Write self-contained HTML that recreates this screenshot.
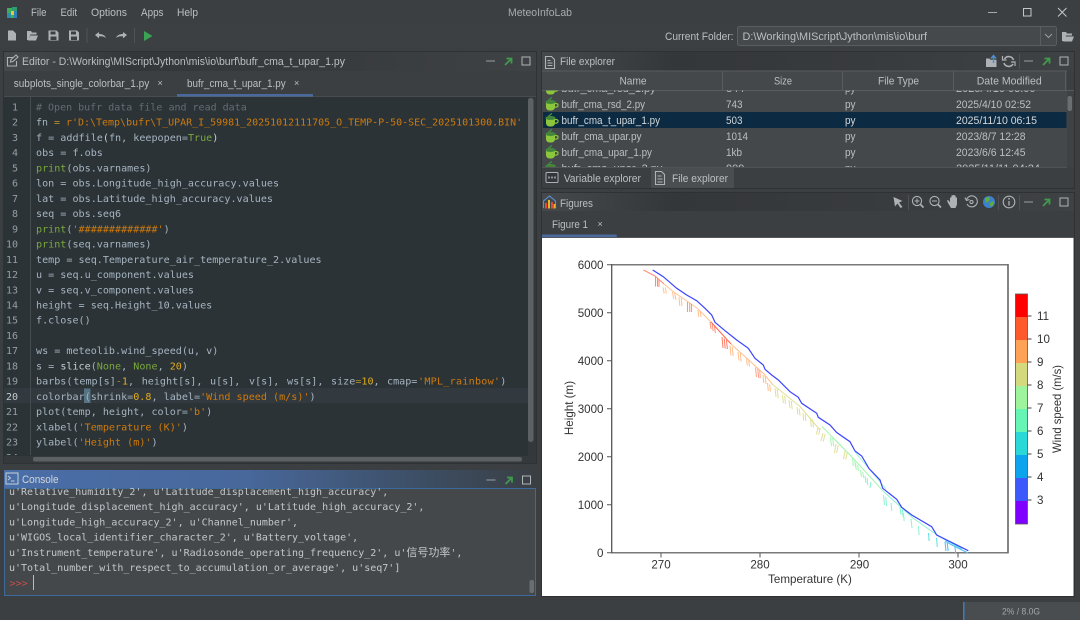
<!DOCTYPE html>
<html><head><meta charset="utf-8"><title>MeteoInfoLab</title>
<style>
html,body{margin:0;padding:0;background:#3c3f41;width:1080px;height:620px;overflow:hidden}
svg{display:block;position:absolute;left:0;top:0;filter:blur(.35px)}
.s{font-family:"Liberation Sans",sans-serif;font-size:11px;fill:#bcbfc2}
.m{font-family:"DejaVu Sans Mono","Liberation Mono",monospace;font-size:10.1px;fill:#a6b4c0;white-space:pre}
.c{fill:#c2c7ca;font-size:10px}
.n{font-family:"DejaVu Sans Mono","Liberation Mono",monospace;font-size:10px;fill:#949fa5;text-anchor:end}
.cm{fill:#626d73}.st{fill:#cf7a0c}.kw{fill:#7aa83c}.nu{fill:#e0ac1c}.br{fill:#c8d0d6}.op{fill:#b58a30}
.p{font-family:"Liberation Sans",sans-serif;font-size:11.6px;fill:#333}
.ic{fill:none;stroke:#aeb2b5;stroke-width:1.1}
.if{fill:#aeb2b5}
</style></head><body>
<svg width="1080" height="620" viewBox="0 0 1080 620" xmlns="http://www.w3.org/2000/svg">
<defs>
<linearGradient id="tg" x1="0" x2="1" y1="0" y2="0"><stop offset="0" stop-color="#46494c"/><stop offset=".25" stop-color="#34373a"/><stop offset=".6" stop-color="#383b3e"/><stop offset="1" stop-color="#3f4244"/></linearGradient>
<linearGradient id="cg" x1="0" x2="1" y1="0" y2="0"><stop offset="0" stop-color="#4a6ea8"/><stop offset=".45" stop-color="#48689c"/><stop offset=".8" stop-color="#3c4d62"/><stop offset="1" stop-color="#3a3f44"/></linearGradient>
<clipPath id="clipCode"><rect x="4" y="97" width="524" height="358"/></clipPath>
<clipPath id="clipCon"><rect x="5" y="488" width="525" height="107"/></clipPath>
<clipPath id="clipTab"><rect x="542" y="90.5" width="525" height="77"/></clipPath>
<g id="cup">
<path d="M-5,-1.5h9v4.5a3.5,3.5 0 0 1 -3.5,3.5h-2a3.5,3.5 0 0 1 -3.5,-3.5z" fill="#8cc63a"/>
<path d="M4,-0.5h1.3a1.7,1.7 0 0 1 0,3.6h-1.5" fill="none" stroke="#8cc63a" stroke-width="1.2"/>
<ellipse cx="-0.5" cy="-2" rx="4.6" ry="1.6" fill="#4f7f34" stroke="#3c8f42" stroke-width=".9"/>
<path d="M-2.5,-3.5c0,-1.6 3,-1.4 3,-3.4" fill="none" stroke="#3c8f42" stroke-width="1.3"/>
</g>
<g id="ctl">
<path d="M0,0h9" stroke="#9a9ea1" stroke-width="1"/>
<path d="M19,4l6,-6M20.5,-2.5h5v5" fill="none" stroke="#3f9a4c" stroke-width="1.8"/>
<rect x="36" y="-4" width="8" height="8" fill="none" stroke="#b0b4b7" stroke-width="1"/>
</g>
</defs>

<rect width="1080" height="620" fill="#3c3f41"/>
<rect x="0" y="24" width="1080" height="23" fill="#3d4043"/>

<!-- logo -->
<rect x="7" y="8" width="5" height="5" fill="#3fae5c"/><rect x="12" y="7" width="5" height="4" fill="#2f9e6e"/>
<rect x="7" y="13" width="4" height="5" fill="#2f8fa8"/><rect x="11" y="11" width="3" height="4" fill="#e6c93a"/>
<rect x="14" y="11" width="3" height="7" fill="#2c7fb8"/><rect x="11" y="15" width="3" height="3" fill="#3fae5c"/>

<!-- menu -->
<g class="s">
<text class="s" x="31" y="16" textLength="15.5" lengthAdjust="spacingAndGlyphs">File</text>
<text class="s" x="60.5" y="16" textLength="16.5" lengthAdjust="spacingAndGlyphs">Edit</text>
<text class="s" x="91" y="16" textLength="36" lengthAdjust="spacingAndGlyphs">Options</text>
<text class="s" x="141" y="16" textLength="22.5" lengthAdjust="spacingAndGlyphs">Apps</text>
<text class="s" x="177" y="16" textLength="21" lengthAdjust="spacingAndGlyphs">Help</text>
<text class="s" x="508" y="16" textLength="64" lengthAdjust="spacingAndGlyphs" style="fill:#a8abae">MeteoInfoLab</text>
<text class="s" x="665" y="40" textLength="68.5" lengthAdjust="spacingAndGlyphs">Current Folder:</text>
</g>

<!-- window controls -->
<path d="M988,12.5h9" stroke="#a8abae"/>
<rect x="1023.5" y="8.5" width="7.5" height="7.5" fill="none" stroke="#c4c7c9"/>
<path d="M1058,8l8.5,8.5M1066.5,8l-8.5,8.5" stroke="#c4c7c9" stroke-width="1"/>

<!-- toolbar -->
<path d="M8,30.5h5l3,3v7h-8z" class="if"/>
<path d="M27,40v-9h4l1,1.5h4.5v2h-6l-2,5.5zM30.5,35.5h7.5l-2,5h-8z" class="if"/>
<path d="M48.5,30.5h8l2,2v8h-10zM50.5,31.5v3h5v-3zM50.5,36.5v3.5h6v-3.5z" class="if" fill-rule="evenodd"/>
<path d="M69,30.5h8l2,2v8h-10zM71,31.5v3h5v-3zM71,36.5v3.5h6v-3.5z" class="if" fill-rule="evenodd"/>
<rect x="86.5" y="28" width="1" height="15" fill="#505356"/>
<path d="M95,35l4,-3v2c3,0 6,1 7,4c-2,-1.5 -4,-2 -7,-1.6v2z" class="if"/>
<path d="M127,35l-4,-3v2c-3,0 -6,1 -7,4c2,-1.5 4,-2 7,-1.6v2z" class="if"/>
<rect x="134" y="28" width="1" height="15" fill="#505356"/>
<path d="M144,31l8.5,5l-8.5,5z" fill="#3aa354"/>

<!-- current folder combo -->
<rect x="737.5" y="26.5" width="319" height="19" rx="2" fill="#46494b" stroke="#5b5e61"/>
<rect x="1040" y="27" width="1" height="18" fill="#5b5e61"/>
<path d="M1045,34l3.5,3.5l3.5,-3.5" fill="none" stroke="#9a9ea1"/>
<text class="s" x="742.5" y="40" textLength="184.5" lengthAdjust="spacingAndGlyphs">D:\Working\MIScript\Jython\mis\io\burf</text>
<path d="M1062,41v-9h4l1,1.5h5v2h-6l-2,5.5zM1065.5,36.5h8.5l-2,5h-9z" class="if"/>

<!-- EDITOR -->
<rect x="3.5" y="51.5" width="533" height="412" fill="#3c3f41" stroke="#2f3133"/>
<rect x="4" y="52" width="532" height="19" fill="url(#tg)"/>
<path d="M7.5,57.5h6M7.5,57v9h9v-5M10.5,62l0.5,-2.5l5,-4.5l2,2l-5,4.5z" class="ic"/>
<text class="s" x="22" y="65" textLength="323" lengthAdjust="spacingAndGlyphs">Editor - D:\Working\MIScript\Jython\mis\io\burf\bufr_cma_t_upar_1.py</text>
<use href="#ctl" x="486" y="61"/>
<text class="s" x="13.7" y="87" textLength="135.6" lengthAdjust="spacingAndGlyphs">subplots_single_colorbar_1.py</text>
<text class="s" x="157.5" y="86" style="font-size:9px">×</text>
<text class="s" x="187" y="87" textLength="98.7" lengthAdjust="spacingAndGlyphs">bufr_cma_t_upar_1.py</text>
<text class="s" x="294" y="86" style="font-size:9px">×</text>
<rect x="177" y="94" width="136" height="2.5" fill="#4a6a9e"/>
<rect x="4" y="96.5" width="532" height="1" fill="#55585a"/>
<rect x="4" y="97" width="532" height="366" fill="#2b3337"/>
<rect x="4" y="388" width="524" height="15.2" fill="#323a3f"/>
<rect x="30" y="97" width="1" height="358" fill="#454c50"/>
<rect x="84" y="388.5" width="6.5" height="14.5" fill="#557383"/>
<rect x="528" y="97" width="8" height="359" fill="#33383b"/>
<rect x="528" y="98" width="5.5" height="344" rx="2.5" fill="#5c6164"/>
<rect x="4" y="456" width="532" height="7" fill="#34393c"/>
<rect x="33" y="457" width="489" height="4.5" rx="2" fill="#5c6164"/>

<g clip-path="url(#clipCode)">
<g>
<text class="n" x="18" y="110.5">1</text><text class="n" x="18" y="125.7">2</text><text class="n" x="18" y="141">3</text><text class="n" x="18" y="156.2">4</text><text class="n" x="18" y="171.4">5</text><text class="n" x="18" y="186.7">6</text><text class="n" x="18" y="201.9">7</text><text class="n" x="18" y="217.1">8</text><text class="n" x="18" y="232.3">9</text><text class="n" x="18" y="247.6">10</text><text class="n" x="18" y="262.8">11</text><text class="n" x="18" y="278">12</text><text class="n" x="18" y="293.3">13</text><text class="n" x="18" y="308.5">14</text><text class="n" x="18" y="323.7">15</text><text class="n" x="18" y="338.9">16</text><text class="n" x="18" y="354.2">17</text><text class="n" x="18" y="369.4">18</text><text class="n" x="18" y="384.6">19</text><text class="n" x="18" y="399.9" style="fill:#c3cbd0">20</text><text class="n" x="18" y="415.1">21</text><text class="n" x="18" y="430.3">22</text><text class="n" x="18" y="445.6">23</text><text class="n" x="18" y="460.8">24</text>
</g>
<text class="m" x="36" y="110.5" style="font-size:10px"><tspan class="cm"># Open bufr data file and read data</tspan></text>
<text class="m" x="36" y="125.7" style="font-size:9.97px">fn <tspan class="op">=</tspan> <tspan class="st">r'D:\Temp\bufr\T_UPAR_I_59981_20251012111705_O_TEMP-P-50-SEC_2025101300.BIN'</tspan></text>
<text class="m" x="36" y="141">f = addfile<tspan class="br">(</tspan>fn, keepopen=<tspan class="kw">True</tspan><tspan class="br">)</tspan></text>
<text class="m" x="36" y="156.2">obs = f.obs</text>
<text class="m" x="36" y="171.4"><tspan class="kw">print</tspan>(obs.varnames)</text>
<text class="m" x="36" y="186.7">lon = obs.Longitude_high_accuracy.values</text>
<text class="m" x="36" y="201.9">lat = obs.Latitude_high_accuracy.values</text>
<text class="m" x="36" y="217.1">seq = obs.seq6</text>
<text class="m" x="36" y="232.3"><tspan class="kw">print</tspan>(<tspan class="st">'#############'</tspan>)</text>
<text class="m" x="36" y="247.6"><tspan class="kw">print</tspan>(seq.varnames)</text>
<text class="m" x="36" y="262.8">temp = seq.Temperature_air_temperature_2.values</text>
<text class="m" x="36" y="278">u = seq.u_component.values</text>
<text class="m" x="36" y="293.3">v = seq.v_component.values</text>
<text class="m" x="36" y="308.5">height = seq.Height_10.values</text>
<text class="m" x="36" y="323.7">f.close()</text>
<text class="m" x="36" y="354.2">ws = meteolib.wind_speed(u, v)</text>
<text class="m" x="36" y="369.4">s = <tspan class="br">slice</tspan>(<tspan class="kw">None</tspan>, <tspan class="kw">None</tspan>, <tspan class="nu">20</tspan>)</text>
<text class="m" x="36" y="384.6">barbs(<tspan x="73.3">temp[s]</tspan><tspan class="op">-</tspan><tspan class="nu">1</tspan>, <tspan x="141.7">height[s],</tspan> <tspan x="210">u[s],</tspan> <tspan x="249">v[s],</tspan> <tspan x="287">ws[s],</tspan> <tspan x="331">size</tspan><tspan class="op">=</tspan><tspan class="nu">10</tspan>, <tspan x="387">cmap=</tspan><tspan class="st" x="418" letter-spacing=".25">'MPL_rainbow'</tspan><tspan letter-spacing=".25">)</tspan></text>
<text class="m" x="36" y="399.9">colorbar(shrink=<tspan class="nu">0.8</tspan>, label=<tspan class="st">'Wind speed (m/s)'</tspan>)</text>
<text class="m" x="36" y="415.1">plot(temp, height, color=<tspan class="st">'b'</tspan>)</text>
<text class="m" x="36" y="430.3">xlabel(<tspan class="st">'Temperature (K)'</tspan>)</text>
<text class="m" x="36" y="445.6">ylabel(<tspan class="st">'Height (m)'</tspan>)</text>
</g>

<!-- CONSOLE -->
<rect x="4" y="470" width="531.5" height="18" fill="url(#cg)"/>
<rect x="6" y="473" width="12" height="11" fill="none" stroke="#c8d0d8" stroke-width="1"/>
<path d="M8,476l2.5,2l-2.5,2M11,481h3.5" fill="none" stroke="#c8d0d8" stroke-width=".9"/>
<text class="s" x="22" y="483" textLength="36.5" lengthAdjust="spacingAndGlyphs" style="fill:#d4d8dc">Console</text>
<use href="#ctl" x="486.5" y="480"/>
<rect x="4.5" y="488.5" width="531" height="107" fill="#45484b" stroke="#3c6a9c"/>
<g clip-path="url(#clipCon)">
<text class="m c" x="9" y="495">u'Relative_humidity_2', u'Latitude_displacement_high_accuracy',</text>
<text class="m c" x="9" y="510.2">u'Longitude_displacement_high_accuracy', u'Latitude_high_accuracy_2',</text>
<text class="m c" x="9" y="525.4">u'Longitude_high_accuracy_2', u'Channel_number',</text>
<text class="m c" x="9" y="540.7">u'WIGOS_local_identifier_character_2', u'Battery_voltage',</text>
<text class="m c" x="9" y="555.9">u'Instrument_temperature', u'Radiosonde_operating_frequency_2', u'<tspan style="font-family:'Noto Sans CJK SC',sans-serif;font-size:11px">信号功率</tspan>',</text>
<text class="m c" x="9" y="571.1">u'Total_number_with_respect_to_accumulation_or_average', u'seq7']</text>
<text class="m" x="9.5" y="586.3" style="fill:#c2504c">&gt;&gt;&gt;</text>
<rect x="33" y="575" width="1" height="15" fill="#b8bcbf"/>
</g>
<rect x="529.5" y="580" width="4.5" height="13" rx="2" fill="#6a6e71"/>

<!-- FILE EXPLORER -->
<rect x="541.5" y="51.5" width="533" height="137" fill="#3c3f41" stroke="#2f3133"/>
<rect x="542" y="52" width="532" height="19" fill="url(#tg)"/>
<path d="M545.5,56.5h6l3,3v9h-9zM547.5,60.5h3M547.5,63h5M547.5,65.5h5" class="ic"/>
<text class="s" x="560" y="65" textLength="55" lengthAdjust="spacingAndGlyphs">File explorer</text>
<path d="M986,58.5h3.5l1,1.3h6v7.2h-10.5z" class="if"/><path d="M993.5,63v-6.5M991,58.5l2.5,-3l2.5,3" fill="none" stroke="#4d8fd0" stroke-width="1.5"/>
<path d="M1013.5,60a5,5 0 0 0 -9,-1M1004,63a5,5 0 0 0 9,1" fill="none" stroke="#aeb2b5" stroke-width="1.6"/>
<path d="M1002.5,56v4h4M1015,66v-4h-4" fill="none" stroke="#aeb2b5" stroke-width="1.2"/>
<rect x="1019" y="54" width="1" height="15" fill="#505356"/>
<use href="#ctl" x="1024" y="61"/>

<rect x="542" y="71" width="525" height="19" fill="#45484b"/>
<rect x="542" y="70.5" width="525" height="1" fill="#595c5f"/>
<rect x="542" y="90" width="532" height="1" fill="#595c5f"/>
<rect x="722" y="71" width="1" height="19" fill="#595c5f"/><rect x="842" y="71" width="1" height="19" fill="#595c5f"/><rect x="953" y="71" width="1" height="19" fill="#595c5f"/><rect x="1065" y="71" width="1" height="19" fill="#595c5f"/>
<g>
<text class="s" x="619.5" y="84.5" textLength="27" lengthAdjust="spacingAndGlyphs">Name</text>
<text class="s" x="774" y="84.5" textLength="18" lengthAdjust="spacingAndGlyphs">Size</text>
<text class="s" x="878" y="84.5" textLength="41" lengthAdjust="spacingAndGlyphs">File Type</text>
<text class="s" x="976.7" y="84.5" textLength="65" lengthAdjust="spacingAndGlyphs">Date Modified</text>
</g>
<rect x="542" y="91" width="532" height="77" fill="#45484b"/>
<rect x="1067" y="91" width="7" height="77" fill="#3f4244"/>
<rect x="1067.5" y="96" width="4.5" height="15" rx="2" fill="#6a6e71"/>
<rect x="543" y="112" width="523.5" height="16" fill="#0c2a42"/>
<g clip-path="url(#clipTab)">
<use href="#cup" x="551" y="88"/><text class="s" x="561.5" y="92">bufr_cma_rsd_1.py</text><text class="s" x="726" y="92">844</text><text class="s" x="845" y="92" textLength="10.5" lengthAdjust="spacingAndGlyphs">py</text><text class="s" x="956" y="92">2025/4/10 03:00</text>
<use href="#cup" x="551" y="104"/><text class="s" x="561.5" y="108" textLength="83.5" lengthAdjust="spacingAndGlyphs">bufr_cma_rsd_2.py</text><text class="s" x="726" y="108" textLength="16.5" lengthAdjust="spacingAndGlyphs">743</text><text class="s" x="845" y="108" textLength="10.5" lengthAdjust="spacingAndGlyphs">py</text><text class="s" x="956" y="108" textLength="75" lengthAdjust="spacingAndGlyphs">2025/4/10 02:52</text>
<use href="#cup" x="551" y="120"/><text class="s" x="561.5" y="124" textLength="98.5" lengthAdjust="spacingAndGlyphs" style="fill:#d4d8da">bufr_cma_t_upar_1.py</text><text class="s" x="726" y="124" textLength="16.5" lengthAdjust="spacingAndGlyphs" style="fill:#d4d8da">503</text><text class="s" x="845" y="124" textLength="10.5" lengthAdjust="spacingAndGlyphs" style="fill:#d4d8da">py</text><text class="s" x="956" y="124" textLength="81" lengthAdjust="spacingAndGlyphs" style="fill:#d4d8da">2025/11/10 06:15</text>
<use href="#cup" x="551" y="136"/><text class="s" x="561.5" y="140" textLength="80" lengthAdjust="spacingAndGlyphs">bufr_cma_upar.py</text><text class="s" x="726" y="140" textLength="22" lengthAdjust="spacingAndGlyphs">1014</text><text class="s" x="845" y="140" textLength="10.5" lengthAdjust="spacingAndGlyphs">py</text><text class="s" x="956" y="140" textLength="69.5" lengthAdjust="spacingAndGlyphs">2023/8/7 12:28</text>
<use href="#cup" x="551" y="152"/><text class="s" x="561.5" y="156" textLength="90.5" lengthAdjust="spacingAndGlyphs">bufr_cma_upar_1.py</text><text class="s" x="726" y="156" textLength="16" lengthAdjust="spacingAndGlyphs">1kb</text><text class="s" x="845" y="156" textLength="10.5" lengthAdjust="spacingAndGlyphs">py</text><text class="s" x="956" y="156" textLength="69.5" lengthAdjust="spacingAndGlyphs">2023/6/6 12:45</text>
<use href="#cup" x="551" y="168"/><text class="s" x="561.5" y="172">bufr_cma_upar_2.py</text><text class="s" x="726" y="172">909</text><text class="s" x="845" y="172" textLength="10.5" lengthAdjust="spacingAndGlyphs">py</text><text class="s" x="956" y="172">2025/11/11 04:24</text>
</g>
<rect x="542" y="167.5" width="532" height="20.5" fill="#3c3f41"/>
<rect x="542" y="167" width="525" height="1" fill="#505356"/>
<rect x="651" y="168" width="83" height="20" rx="1" fill="#4a4e51"/>
<rect x="546" y="172.5" width="12" height="10" rx="1" fill="#33363a" stroke="#aeb2b5"/>
<path d="M548,177.5h8" stroke="#8d9194" stroke-width="2" stroke-dasharray="2 1"/>
<path d="M655.5,171.5h6l3,3v10h-9zM657.5,176h4M657.5,179h5M657.5,182h5" class="ic"/>
<text class="s" x="563.7" y="182" textLength="77.3" lengthAdjust="spacingAndGlyphs">Variable explorer</text>
<text class="s" x="672" y="182" textLength="56" lengthAdjust="spacingAndGlyphs">File explorer</text>

<!-- FIGURES -->
<rect x="541.5" y="192.5" width="533" height="404" fill="#3c3f41" stroke="#2f3133"/>
<rect x="542" y="193" width="532" height="18" fill="url(#tg)"/>
<path d="M543.5,208v-7l6,-5l6,5v7" fill="none" stroke="#5a8fd0" stroke-width="1.1"/>
<rect x="545" y="203" width="2" height="5.5" fill="#e04a3a"/><rect x="548" y="200" width="2" height="8.5" fill="#e8b52a"/><rect x="551" y="202" width="2" height="6.5" fill="#e04a3a"/><rect x="553.5" y="204" width="2" height="4.5" fill="#e8b52a"/>
<text class="s" x="560" y="207" textLength="33" lengthAdjust="spacingAndGlyphs">Figures</text>
<path d="M893.5,197l9,4l-3.5,1.5l3.5,4.5l-2,1l-3,-4.5l-2.5,3z" class="if"/>
<rect x="908" y="195" width="1" height="15" fill="#505356"/>
<circle cx="917" cy="201" r="4.6" class="ic"/><path d="M920.5,204.5l3,3" stroke="#aeb2b5" stroke-width="1.6"/><path d="M914.5,201h5M917,198.5v5" stroke="#aeb2b5"/>
<circle cx="934.5" cy="201" r="4.6" class="ic"/><path d="M938,204.5l3,3" stroke="#aeb2b5" stroke-width="1.6"/><path d="M932,201h5" stroke="#aeb2b5"/>
<path d="M950,201v-3.5h1.4v3v-5h1.4v5v-5.5h1.4v5.5v-5h1.4v5.5v-3.5h1.4v7l-1.5,3.5h-4.5l-3,-5l-1,-2.5l1.2,-.5l1.8,2.4z" class="if"/>
<path d="M966.5,200a5.5,5.5 0 1 1 .5,4" class="ic"/><circle cx="971.5" cy="202" r="1.6" class="ic"/><path d="M965,197.5l1.5,3l3,-1" class="ic"/>
<circle cx="989" cy="202" r="6" fill="#3f7fd0"/><path d="M985,198c2,-1 4,-1 5,0l-1,3l-3,2zM990,203l3,-2l1,2l-2,3.5l-2,-.5z" fill="#5fae3c"/>
<rect x="998" y="195" width="1" height="15" fill="#505356"/>
<circle cx="1009" cy="202" r="5.8" class="ic"/><path d="M1009,201v4.5" stroke="#aeb2b5" stroke-width="1.3"/><circle cx="1009" cy="198.8" r=".9" class="if"/>
<rect x="1019" y="195" width="1" height="15" fill="#505356"/>
<use href="#ctl" x="1024" y="202"/>

<text class="s" x="552" y="228" textLength="36" lengthAdjust="spacingAndGlyphs">Figure 1</text>
<text class="s" x="597.5" y="227" style="font-size:9px">×</text>
<rect x="542" y="234.5" width="74.7" height="2.5" fill="#4a6a9e"/>
<rect x="542" y="237" width="531.5" height="1" fill="#55585a"/>

<rect x="542" y="238" width="531.5" height="358" fill="#fff"/>

<!-- plot -->
<g stroke-linecap="butt" fill="none">
<path d="M611.7,264.7H1008V552.7H611.7" stroke="#7a7a7a" stroke-width="1.5"/>
<path d="M1008,264V553" stroke="#666" stroke-width="1.3"/>
<path d="M611.7,264V553.3" stroke="#555" stroke-width="1.3"/>
<path d="M607,264.7h4.7M607,312.7h4.7M607,360.7h4.7M607,408.7h4.7M607,456.7h4.7M607,504.7h4.7M607,552.7h4.7M661,553v4.5M760,553v4.5M859,553v4.5M958,553v4.5" stroke="#555" stroke-width="1"/>
</g>
<g>
<text class="p" text-anchor="end" x="603.5" y="268.8">6000</text><text class="p" text-anchor="end" x="603.5" y="316.8">5000</text><text class="p" text-anchor="end" x="603.5" y="364.8">4000</text><text class="p" text-anchor="end" x="603.5" y="412.8">3000</text><text class="p" text-anchor="end" x="603.5" y="460.8">2000</text><text class="p" text-anchor="end" x="603.5" y="508.8">1000</text><text class="p" text-anchor="end" x="603.5" y="556.8">0</text>
</g>
<g>
<text class="p" text-anchor="middle" x="661" y="568.5">270</text><text class="p" text-anchor="middle" x="760" y="568.5">280</text><text class="p" text-anchor="middle" x="859.5" y="568.5">290</text><text class="p" text-anchor="middle" x="958" y="568.5">300</text>
<text class="p" text-anchor="middle" x="810" y="583">Temperature (K)</text>
<text class="p" text-anchor="middle" transform="translate(573,408) rotate(-90)">Height (m)</text>
<text class="p" transform="translate(1061,453) rotate(-90)" textLength="88" lengthAdjust="spacingAndGlyphs">Wind speed (m/s)</text>
</g>

<!-- barbs -->
<g fill="none" stroke-width="1.05">
<g stroke="#ff7e62" opacity=".9"><path d="M643.5,270L655,276L664,284"/><path d="M655.5,276.5v10M657.5,277.5v9M659,279v8"/></g>
<g stroke="#ffc08f" opacity=".95"><path d="M664,284L673,291.5L697,308L711,322"/>
<path d="M663,287.5l1.2,6M665.2,287.5l1.2,6M672.5,292l1.2,7M674.7,293l1.2,7M679,297l.8,9M681.2,298l.8,8M698,310l.8,7M700.2,311l.8,6"/></g>
<g stroke="#ff8a70" opacity=".9"><path d="M687.5,302v10M689.7,303v9M691.5,304v8M710,322l1,7M712.2,324l1,7M714.4,326l1,7"/></g>
<g stroke="#ff6a50"><path d="M711,322L731,344"/><path d="M722,337l1,11M724.2,338.5l1,10M726.4,340l1,9" opacity=".85"/></g>
<g stroke="#ffc08f"><path d="M731,344L747,358.5L764,374L773,385"/>
<path d="M730,345.5l1,10M732.2,347l1,9M738,352l1,8.5M740.2,353l1,8.5M746.5,358.5l.8,7M748.7,360l.8,6.5M763,375l.8,8M765.2,376l.8,8M767.5,383l.8,8M769.7,384.5l.8,7"/></g>
<g stroke="#ff9a80" opacity=".9"><path d="M755.5,367.5l1,9.5M757.7,368.5l1,9.5M759.7,370l.6,8"/></g>
<g stroke="#e2e09a"><path d="M772,384L800,406.5L820,430"/><path d="M835,440L851,456"/>
<path d="M775,388l1,9M777.2,389l1,9M782.5,395l.8,8M784.7,396l.8,8M789,400l1,8M791.2,401l1,8M797,407l.8,7.5M799.2,408.5l.8,7M803,413l.6,7.5M805.2,414l.6,7M810.5,418l.8,9M812.7,419.5l.8,8M818,427l-1.5,7.5M820.2,428l-1.5,7M823,433l-2,8M825.2,434l-2,7.5M836,444l-1.5,9M838.2,445l-1.5,8M845,451l-1.5,8M847.2,452.5l-1.5,7"/></g>
<g stroke="#aaf6b4"><path d="M822,426.5L851,456L884,492"/>
<path d="M830.5,437l1,9M832.7,438l1,8.5M852.5,458l.8,8M854.7,460l.8,7M855.5,463l.8,7M857.7,465l.8,6M860.5,470l1,7M862.7,472l1,6"/></g>
<g stroke="#8ef4d2"><path d="M884,492L913,518L937,535"/><path d="M855,452L886,489" stroke-width=".8"/>
<path d="M865,476l1,7M867.2,478l.5,7M871,482l-1,6M883.5,495l1,10M885.7,497l1,9M891,503l.8,8M900,507l1,8M902.2,509l1,8M903.5,513l.6,8M911,519l1,9M918.5,526l.6,9"/></g>
<g stroke="#5ee4e4"><path d="M937,535L962,549"/><path d="M928.5,533l.6,8M936.5,538l.8,9" /></g>
<g stroke="#50bef2"><path d="M945,541l5,3M950,544L968,553"/><path d="M945,542l1,9M947.2,543l1,8M955,547l.6,6"/></g>
</g>
<!-- blue line -->
<polyline fill="none" stroke="#3c44ff" stroke-width="1.2" points="652.7,270 663.3,276.7 676.7,288.3 686.7,295 696.7,300.7 705,308.3 711.7,315 715,322.3 725,330.7 736.7,340 748.3,348.3 755,358.3 763.3,365 765,369.3 771.7,375 778.3,380 790,391.7 798.3,397.3 801.7,403.3 816.7,413.3 818.3,417.3 830,425 836.7,432.5 850,441.7 855,451 861.7,456 869,468.5 880,480 882.7,488.3 896.7,499.3 901.7,507.3 911.7,515 931.7,526.7 936.7,535 968.3,550.7"/>

<!-- colorbar -->
<rect x="1015.5" y="294" width="12" height="23" fill="#ff0000"/>
<rect x="1015.5" y="317" width="12" height="23" fill="#ff5a2c"/>
<rect x="1015.5" y="340" width="12" height="23" fill="#ffa255"/>
<rect x="1015.5" y="363" width="12" height="23" fill="#d4d97e"/>
<rect x="1015.5" y="386" width="12" height="23" fill="#9df49c"/>
<rect x="1015.5" y="409" width="12" height="23" fill="#66f5b5"/>
<rect x="1015.5" y="432" width="12" height="23" fill="#2ad8d8"/>
<rect x="1015.5" y="455" width="12" height="23" fill="#0da4ee"/>
<rect x="1015.5" y="478" width="12" height="23" fill="#3d58fb"/>
<rect x="1015.5" y="501" width="12" height="23" fill="#7f00ff"/>
<rect x="1015.5" y="294" width="12" height="230" fill="none" stroke="#555" stroke-width=".8"/>
<path d="M1027.5,316h4M1027.5,339h4M1027.5,362h4M1027.5,385h4M1027.5,408h4M1027.5,431h4M1027.5,454h4M1027.5,477h4M1027.5,500h4" stroke="#444" stroke-width="1"/>
<g>
<text class="p" x="1037" y="320">11</text><text class="p" x="1037" y="343">10</text><text class="p" x="1037" y="366">9</text><text class="p" x="1037" y="389">8</text><text class="p" x="1037" y="412">7</text><text class="p" x="1037" y="435">6</text><text class="p" x="1037" y="458">5</text><text class="p" x="1037" y="481">4</text><text class="p" x="1037" y="504">3</text>
</g>

<!-- status -->
<rect x="963" y="602" width="117" height="18" fill="#4a4d50"/>
<rect x="963" y="602" width="1.5" height="18" fill="#3f7ac0"/>
<text class="s" x="1002" y="614.5" textLength="38" lengthAdjust="spacingAndGlyphs" style="fill:#a4a8ab;font-size:9.5px">2% / 8.0G</text>
</svg>
</body></html>
